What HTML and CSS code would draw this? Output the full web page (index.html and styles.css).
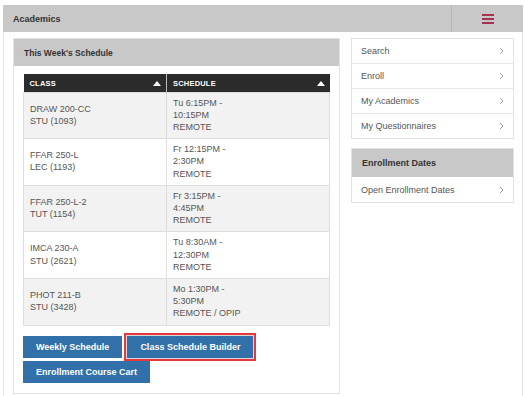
FILE: index.html
```html
<!DOCTYPE html>
<html lang="en">

<head>
  <meta charset="UTF-8">
  <meta name="viewport" content="width=device-width, initial-scale=1.0">
  <title>Academics</title>
  <link rel="stylesheet" href="styles.css">
</head>

<body>
  <div class="page">
    <div class="topbar">
      <div class="topbar-title">Academics</div>
      <a href="#" class="menu-toggle">
        <svg width="12" height="10" viewBox="0 0 12 10">
          <rect x="0" y="0" width="12" height="2" fill="#a6324f" />
          <rect x="0" y="4" width="12" height="2" fill="#a6324f" />
          <rect x="0" y="8" width="12" height="2" fill="#a6324f" />
        </svg>
      </a>
    </div>

    <div class="content">
      <div class="panel schedule-panel">
        <div class="panel-header">This Week's Schedule</div>
        <div class="panel-body">
          <table class="schedule">
            <thead>
              <tr>
                <th class="col-class"><span>CLASS</span><i class="sort"></i></th>
                <th class="col-time"><span>SCHEDULE</span><i class="sort"></i></th>
              </tr>
            </thead>
            <tbody>
              <tr>
                <td>DRAW 200-CC<br>STU (1093)</td>
                <td>Tu 6:15PM -<br>10:15PM<br>REMOTE</td>
              </tr>
              <tr>
                <td>FFAR 250-L<br>LEC (1193)</td>
                <td>Fr 12:15PM -<br>2:30PM<br>REMOTE</td>
              </tr>
              <tr>
                <td>FFAR 250-L-2<br>TUT (1154)</td>
                <td>Fr 3:15PM -<br>4:45PM<br>REMOTE</td>
              </tr>
              <tr>
                <td>IMCA 230-A<br>STU (2621)</td>
                <td>Tu 8:30AM -<br>12:30PM<br>REMOTE</td>
              </tr>
              <tr>
                <td>PHOT 211-B<br>STU (3428)</td>
                <td>Mo 1:30PM -<br>5:30PM<br>REMOTE / OPIP</td>
              </tr>
            </tbody>
          </table>

          <div class="buttons">
            <a href="#" class="btn">Weekly Schedule</a>
            <a href="#" class="btn highlighted">Class Schedule Builder</a>
            <a href="#" class="btn">Enrollment Course Cart</a>
          </div>
        </div>
      </div>

      <div class="side">
        <div class="menu-list">
          <a href="#" class="menu-item">Search<svg width="5" height="8" viewBox="0 0 5 8"><polyline points="1,1 4,4 1,7" /></svg></a>
          <a href="#" class="menu-item">Enroll<svg width="5" height="8" viewBox="0 0 5 8"><polyline points="1,1 4,4 1,7" /></svg></a>
          <a href="#" class="menu-item">My Academics<svg width="5" height="8" viewBox="0 0 5 8"><polyline points="1,1 4,4 1,7" /></svg></a>
          <a href="#" class="menu-item">My Questionnaires<svg width="5" height="8" viewBox="0 0 5 8"><polyline points="1,1 4,4 1,7" /></svg></a>
        </div>

        <div class="menu-list dates">
          <div class="menu-header">Enrollment Dates</div>
          <a href="#" class="menu-item">Open Enrollment Dates<svg width="5" height="8" viewBox="0 0 5 8"><polyline points="1,1 4,4 1,7" /></svg></a>
        </div>
      </div>
    </div>
  </div>
</body>

</html>
```

FILE: styles.css
```css
* {
  margin: 0;
  padding: 0;
  box-sizing: border-box;
}

body {
  font-family: 'Liberation Sans', Arial, sans-serif;
  font-size: 9px;
  color: #555;
  background: #fff;
}

.page {
  width: 520px;
  min-height: 400px;
  margin: 5px 0 0 3px;
  border: 1px solid #e4e4e4;
  border-top: none;
}

.topbar {
  display: flex;
  align-items: stretch;
  height: 27px;
  margin: 0 -1px;
  background: #c8c8c8;
}

.topbar-title {
  flex: 1;
  display: flex;
  align-items: center;
  padding-left: 10px;
  font-weight: bold;
  color: #333;
}

.menu-toggle {
  width: 72px;
  display: flex;
  align-items: center;
  justify-content: center;
  border-left: 1px solid #b8b8b8;
}

.content {
  display: flex;
  align-items: flex-start;
  gap: 11px;
  padding: 6px 8px 0 9px;
}

.panel {
  border: 1px solid #e2e2e2;
}

.schedule-panel {
  width: 327px;
}

.panel-header {
  height: 27px;
  display: flex;
  align-items: center;
  padding-left: 10px;
  background: #c8c8c8;
  font-size: 8.5px;
  font-weight: bold;
  color: #333;
}

.panel-body {
  padding: 8px 9px 10px;
}

.schedule {
  width: 307px;
  border-collapse: collapse;
}

.schedule th {
  height: 18px;
  padding: 0 5px 0 6px;
  background: #2b2b2b;
  color: #fff;
  font-size: 7.5px;
  font-weight: bold;
  text-align: left;
  letter-spacing: 0.2px;
}

.schedule th.col-class {
  width: 143px;
}

.schedule th.col-time {
  border-left: 1px solid #bbb;
}

.schedule th span {
  vertical-align: middle;
}

.sort {
  float: right;
  margin-top: 3px;
  width: 0;
  height: 0;
  border-left: 4px solid transparent;
  border-right: 4px solid transparent;
  border-bottom: 5px solid #fff;
}

.schedule td {
  padding: 4px 6px 5px;
  line-height: 12.2px;
  border: 1px solid #dedede;
  vertical-align: middle;
}

.schedule tbody tr:nth-child(odd) {
  background: #f2f2f2;
}

.buttons {
  display: flex;
  flex-wrap: wrap;
  gap: 3px 5px;
  margin-top: 10px;
}

.btn {
  display: flex;
  align-items: center;
  height: 22px;
  padding: 0 13px;
  background: #3170a8;
  color: #fff;
  font-size: 9px;
  font-weight: bold;
  text-decoration: none;
}

.btn.highlighted {
  outline: 2px solid #e5393f;
  outline-offset: 1px;
  box-shadow: 0 0 0 1px #d8d8d8;
}

.side {
  width: 163px;
}

.menu-list {
  border: 1px solid #e2e2e2;
}

.menu-list.dates {
  margin-top: 9px;
}

.menu-header {
  height: 28px;
  display: flex;
  align-items: center;
  padding-left: 10px;
  background: #c8c8c8;
  font-weight: bold;
  color: #333;
}

.menu-item {
  display: flex;
  align-items: center;
  justify-content: space-between;
  height: 25px;
  padding: 0 9px 0 9px;
  color: #555;
  text-decoration: none;
  border-top: 1px solid #e6e6e6;
}

.menu-item:first-child {
  border-top: none;
  height: 24px;
}

.menu-header + .menu-item {
  border-top: none;
}

.menu-item svg polyline {
  fill: none;
  stroke: #a0a0a0;
  stroke-width: 1;
}
```
